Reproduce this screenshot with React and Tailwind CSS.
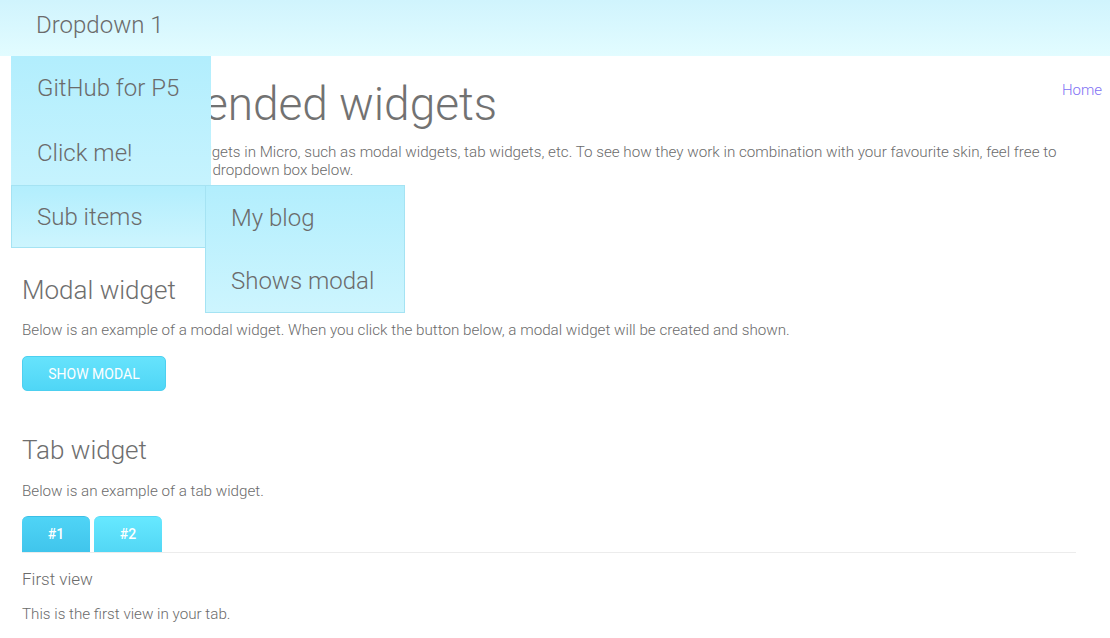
import React from 'react';

export default function App() {
  return (
    <div className="relative min-h-[638px] bg-white text-[#6b6b6b] font-light" style={{ fontFamily: 'Roboto, "Open Sans", sans-serif' }}>
      {/* top bar */}
      <div className="h-[56px] bg-gradient-to-b from-[#d0f4fd] to-[#e2fcff] flex items-center pl-[36px] pb-[6px]">
        <span className="text-[24px] leading-none">Dropdown 1</span>
      </div>

      {/* open dropdown */}
      <div className="absolute left-[11px] top-[56px] w-[200px] z-10">
        <div className="bg-gradient-to-b from-[#b2eefd] to-[#c6f3fe]">
          <div className="h-[64px] flex items-center pl-[26px] text-[24px]">GitHub for P5</div>
          <div className="h-[65px] flex items-center pl-[26px] text-[24px]">Click me!</div>
        </div>
        <div className="relative h-[63px] flex items-center pl-[25px] text-[24px] bg-gradient-to-b from-[#b2eefd] to-[#cdf5fe] border border-[#a5e3f3]">
          Sub items
          <div className="absolute left-[193px] top-[-1px] w-[200px] bg-gradient-to-b from-[#b2eefd] to-[#cdf5fe] border border-[#a5e3f3]">
            <div className="h-[63px] flex items-center pl-[25px] text-[24px]">My blog</div>
            <div className="h-[63px] flex items-center pl-[25px] text-[24px]">Shows modal</div>
          </div>
        </div>
      </div>

      {/* content */}
      <div className="pl-[22px] pr-[8px]">
        <div className="flex justify-between items-start">
          <h1 className="mt-[25px] -ml-[5px] text-[46px] leading-[46px] text-[#727272]">Micro extended widgets</h1>
          <a className="mt-[25px] text-[15px] leading-[18px] text-[#7f72f4]">Home</a>
        </div>
        <div className="w-[1054px]">
          <p className="mt-[16px] -ml-[3px] text-[15.2px] leading-[18px]">
            This page contains a few widgets in Micro, such as modal widgets, tab widgets, etc. To see how they work in combination with your favourite skin, feel free to
            <br />
            <span className="ml-[3px]">select a different skin on the dropdown box below.</span>
          </p>

          <h2 className="mt-[95px] text-[26px] leading-[32px] text-[#6e6e6e]">Modal widget</h2>
          <p className="mt-[15px] text-[15.2px] leading-[18px]">
            Below is an example of a modal widget. When you click the button below, a modal widget will be created and shown.
          </p>
          <button className="mt-[17px] w-[144px] h-[35px] rounded-[5px] border border-[#4dd0f0] bg-gradient-to-b from-[#66e3fc] to-[#4fd6f6] text-white text-[14px] font-normal uppercase pt-[1px]">
            Show modal
          </button>

          <h2 className="mt-[43px] text-[26px] leading-[32px] text-[#6e6e6e]">Tab widget</h2>
          <p className="mt-[16px] text-[15.2px] leading-[18px]">Below is an example of a tab widget.</p>
          <div className="mt-[16px] flex gap-[4px] border-b border-[#ececec]">
            <div className="w-[68px] h-[36px] rounded-t-[6px] border-t border-[#3bbfe6] bg-gradient-to-b from-[#4fd4f6] to-[#40c5ec] text-white text-[14px] font-medium flex items-center justify-center">#1</div>
            <div className="w-[68px] h-[36px] rounded-t-[6px] border-t border-[#55d8f5] bg-gradient-to-b from-[#66e8ff] to-[#52d7f5] text-white text-[14px] font-medium flex items-center justify-center">#2</div>
          </div>
          <div className="mt-[15px] text-[17px] leading-[22px]">First view</div>
          <p className="mt-[15px] text-[15.2px] leading-[18px]">This is the first view in your tab.</p>
        </div>
      </div>
    </div>
  );
}
